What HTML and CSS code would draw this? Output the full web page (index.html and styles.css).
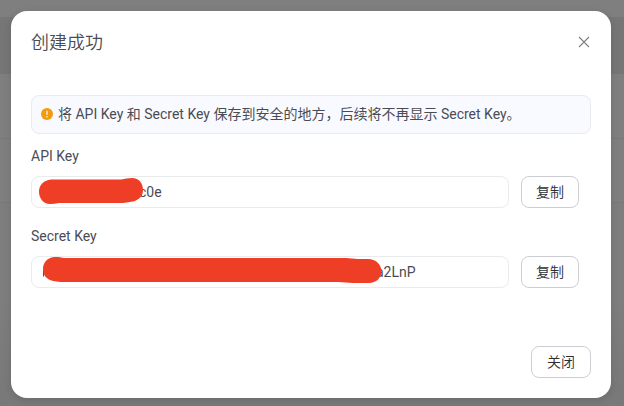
FILE: index.html
```html
<!DOCTYPE html>
<html lang="zh-CN">
<head>
<meta charset="utf-8">
<title>创建成功</title>
<link rel="stylesheet" href="styles.css">
</head>
<body>
<main class="modal">
  <header class="modal-header">
    <h1 class="title">创建成功</h1>
    <svg class="close" viewBox="0 0 12 12" aria-hidden="true"><path d="M1 1 11 11M11 1 1 11"/></svg>
  </header>
  <div class="notice">
    <svg class="notice-icon" viewBox="0 0 12 12" aria-hidden="true"><circle cx="6" cy="6" r="6" fill="#f39a0d"/><path d="M6 2.8v4" stroke="#fff" stroke-width="1.2"/><circle cx="6" cy="8.7" r=".75" fill="#fff"/></svg>
    <span class="notice-text">将 API Key 和 Secret Key 保存到安全的地方，后续将不再显示 Secret Key。</span>
  </div>
  <section class="field">
    <div class="label">API Key</div>
    <div class="row">
      <div class="input input-api"><span>c0e</span>
        <svg class="mask" viewBox="0 0 478 32" aria-hidden="true"><path fill="#ee3e26" d="M20 3.500H90C94 3 97 2 101 2C108 2 112 7.500 112 14C112 21 107 25 99 26C94 27 90 27 86 27H28C25 27.500 22 28 19 28C12 28 8 22 8 15.500C8 9 13 4 20 3.500Z"/></svg>
      </div>
      <button class="button">复制</button>
    </div>
  </section>
  <section class="field">
    <div class="label">Secret Key</div>
    <div class="row">
      <div class="input input-secret"><span>a2LnP</span>
        <svg class="mask" viewBox="0 0 478 32" aria-hidden="true"><path d="M12.500 14V20.500" stroke="#63484a"/><path fill="#ee3e26" d="M24 1C28 1 30 1.500 34 2H315C319 2 323 3 327 3H337C345 3 350 8 350.500 15C350.500 22 345 27 338 27H322C317 27 312 26 307 26H34C28 26 23 25.500 19 24C15 22 12 19 12 13C12 6 17 1 24 1Z"/></svg>
      </div>
      <button class="button">复制</button>
    </div>
  </section>
  <footer class="footer"><button class="button button-close">关闭</button></footer>
</main>
</body>
</html>
```
FILE: styles.css
```css
* { box-sizing: border-box; }
body {
  margin: 0;
  height: 406px;
  overflow: hidden;
  padding: 11px 13px 8px 11px;
  font: 14px/22px Roboto, "Noto Sans CJK SC", sans-serif;
  color: #4b4c53;
  background: linear-gradient(#7f7f7f 0 17px, #767676 17px 74px, #7f7f7f 74px 138px, #797979 138px 139px, #7f7f7f 139px 202px, #797979 202px 203px, #7e7e7e 203px 300px, #797979 390px);
}
.modal {
  display: flex;
  flex-direction: column;
  width: 600px;
  height: 387px;
  padding: 20px;
  border-radius: 16px;
  background: #fff;
  box-shadow: 0 2px 8px rgba(0, 0, 0, .12);
}
.modal-header {
  display: flex;
  justify-content: space-between;
  align-items: center;
  height: 24px;
  margin-bottom: 40px;
}
.title {
  margin: 0;
  font-size: 18px;
  line-height: 24px;
  font-weight: 350;
}
.close {
  width: 12px;
  height: 12px;
  margin-right: 1px;
  margin-top: -2px;
  fill: none;
  stroke: #7d7d82;
  stroke-width: 1.1;
}
.notice {
  display: flex;
  align-items: center;
  gap: 5px;
  height: 39px;
  padding: 0 9px 2px;
  border: 1px solid #e9eaf0;
  border-radius: 8px;
  background: #f9faff;
  white-space: nowrap;
}
.notice-icon { width: 12px; height: 12px; flex: none; }
.field { margin-top: 11px; height: 69px; }
.label { line-height: 22px; margin-bottom: 9px; }
.row { display: flex; gap: 12px; }
.input {
  position: relative;
  width: 478px;
  height: 32px;
  border: 1px solid #eaebed;
  border-radius: 8px;
  line-height: 30px;
}
.input-api { padding-left: 107px; }
.input-secret { padding-left: 344px; }
.mask {
  position: absolute;
  left: -1px;
  top: -1px;
  width: 478px;
  height: 32px;
}
.button {
  width: 58px;
  height: 32px;
  padding: 0;
  border: 1px solid #cdced3;
  border-radius: 8px;
  background: #fff;
  color: #2d2d33;
  font: inherit;
  font-weight: 350;
}
.footer { display: flex; justify-content: flex-end; margin-top: auto; }
.button-close { width: 60px; }
```
